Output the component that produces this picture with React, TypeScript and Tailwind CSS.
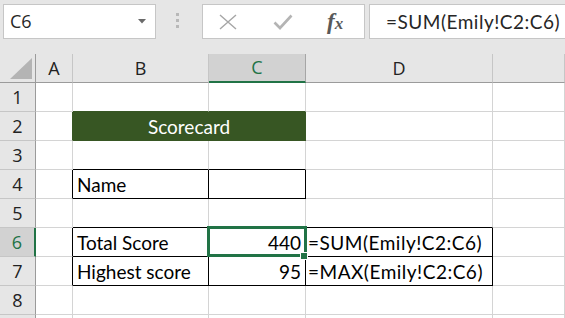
import React from "react";

type Edge = "grid" | "black" | "green";

interface CellSpec {
  text?: string;
  r?: Edge;
  b?: Edge;
  align?: "left" | "right" | "center" | "formula";
  span?: boolean;
  bg?: string;
}

const rightColor: Record<Edge, string> = {
  grid: "border-r-[#d4d4d4]",
  black: "border-r-black",
  green: "border-r-[#375623]",
};

const bottomColor: Record<Edge, string> = {
  grid: "border-b-[#d4d4d4]",
  black: "border-b-black",
  green: "border-b-[#375623]",
};

const alignClass = {
  left: "justify-start px-[4px]",
  right: "justify-end px-[4px]",
  center: "justify-center px-[4px]",
  formula: "justify-start pl-[2px] tracking-[0.5px]",
};

const rows: { n: number; label?: boolean; active?: boolean; cells: CellSpec[] }[] = [
  { n: 1, cells: [{}, { b: "green" }, { b: "green" }, {}, {}] },
  {
    n: 2,
    cells: [
      { r: "green" },
      { text: "Scorecard", r: "green", b: "green", align: "center", span: true, bg: "bg-[#375623] text-white" },
      {},
      {},
    ],
  },
  { n: 3, cells: [{}, { b: "black" }, { b: "black" }, {}, {}] },
  {
    n: 4,
    cells: [{ r: "black" }, { text: "Name", r: "black", b: "black" }, { r: "black", b: "black" }, {}, {}],
  },
  { n: 5, cells: [{}, { b: "black" }, { b: "black" }, { b: "black" }, {}] },
  {
    n: 6,
    active: true,
    cells: [
      { r: "black" },
      { text: "Total Score", r: "black", b: "black" },
      { text: "440", r: "black", b: "black", align: "right" },
      { text: "=SUM(Emily!C2:C6)", r: "black", b: "black", align: "formula" },
      {},
    ],
  },
  {
    n: 7,
    cells: [
      { r: "black" },
      { text: "Highest score", r: "black", b: "black" },
      { text: "95", r: "black", b: "black", align: "right" },
      { text: "=MAX(Emily!C2:C6)", r: "black", b: "black", align: "formula" },
      {},
    ],
  },
  { n: 8, cells: [{}, {}, {}, {}, {}] },
  // only the top edge of row 9 shows
  { n: 9, label: false, cells: [{}, {}, {}, {}, {}] },
];

const cellFont = { fontFamily: "Lato, 'Open Sans', sans-serif" };

const Cell = ({ spec }: { spec: CellSpec }) => (
  <div
    className={`h-[29px] border-r border-b flex items-center pt-[2px] text-[19px] whitespace-nowrap ${
      alignClass[spec.align ?? "left"]
    } ${rightColor[spec.r ?? "grid"]} ${bottomColor[spec.b ?? "grid"]} ${spec.span ? "col-span-2" : ""} ${
      spec.bg ?? "text-black"
    }`}
    style={cellFont}
  >
    {spec.text}
  </div>
);

const headers = ["A", "B", "C", "D", ""];

export default function App() {
  return (
    <div
      className="w-[565px] h-[318px] overflow-hidden bg-white"
      style={{ fontFamily: "'Open Sans', 'Noto Sans', sans-serif" }}
    >
      {/* formula bar */}
      <div className="h-[54px] bg-[#e6e6e6] flex items-start pt-[4px]">
        <div className="ml-[3px] w-[153px] h-[35px] bg-white border border-[#c6c6c6] flex items-center pl-[6px] pr-[9px]">
          <span className="text-[18px] text-[#262626] flex-1">C6</span>
          <svg width="8" height="5" viewBox="0 0 8 5">
            <polygon points="0,0 8,0 4,4.5" fill="#6a6a6a" />
          </svg>
        </div>
        <div className="w-[46px] flex flex-col gap-[3px] pl-[20px] pt-[9px]">
          <div className="w-[3px] h-[3px] bg-[#b8b8b8]" />
          <div className="w-[3px] h-[3px] bg-[#b8b8b8]" />
          <div className="w-[3px] h-[3px] bg-[#b8b8b8]" />
        </div>
        <div className="w-[163px] h-[35px] bg-white border border-[#c6c6c6] flex items-center">
          <svg className="ml-[16px]" width="18" height="16" viewBox="0 0 18 16">
            <path d="M1 1 L17 15 M17 1 L1 15" stroke="#a6a6a6" strokeWidth="1.4" fill="none" />
          </svg>
          <svg className="ml-[36px]" width="20" height="16" viewBox="0 0 20 16">
            <path d="M1.5 8.5 L7 14 L18.5 1.5" stroke="#b4b4b4" strokeWidth="2.6" fill="none" />
          </svg>
          <span
            className="ml-[34px] text-[#595959] italic font-bold leading-none flex items-baseline"
            style={{ fontFamily: "'Liberation Serif', serif" }}
          >
            <span className="text-[23px]">f</span>
            <span className="text-[17px]">x</span>
          </span>
        </div>
        <div className="ml-[4px] flex-1 -mr-[2px] h-[35px] bg-white border border-[#c6c6c6] flex items-center pl-[16px] pt-[1px]">
          <span className="text-[19px] tracking-[0.5px] text-[#262626] whitespace-nowrap" style={cellFont}>
            =SUM(Emily!C2:C6)
          </span>
        </div>
      </div>

      {/* sheet grid */}
      <div className="relative grid grid-cols-[36px_37px_136px_97px_187px_1fr]">
        {/* column headers */}
        <div className="h-[29px] bg-[#e6e6e6] border-r border-b border-r-[#9b9b9b] border-b-[#9b9b9b] flex items-end justify-end pr-[3px] pb-[3px]">
          <svg width="22" height="21" viewBox="0 0 22 21">
            <polygon points="22,0 22,21 0,21" fill="#b4b4b4" />
          </svg>
        </div>
        {headers.map((h) =>
          h === "C" ? (
            <div
              key={h}
              className="h-[29px] bg-[#d2d2d2] border-r border-r-[#a6a6a6] border-b-2 border-b-[#217346] flex items-center justify-center text-[18px] text-[#217346]"
            >
              {h}
            </div>
          ) : (
            <div
              key={h || "E"}
              className="h-[29px] bg-[#e6e6e6] border-r border-b border-r-[#c6c6c6] border-b-[#9b9b9b] flex items-center justify-center text-[18px] text-[#222]"
            >
              {h}
            </div>
          )
        )}

        {rows.map((row) => (
          <React.Fragment key={row.n}>
            {row.active ? (
              <div className="h-[29px] bg-[#d2d2d2] border-r-2 border-b border-r-[#217346] border-b-[#c6c6c6] flex items-center justify-center text-[18px] text-[#217346]">
                {row.n}
              </div>
            ) : (
              <div className="h-[29px] bg-[#e6e6e6] border-r border-b border-r-[#9b9b9b] border-b-[#c6c6c6] flex items-center justify-center text-[18px] text-[#222]">
                {row.label === false ? null : row.n}
              </div>
            )}
            {row.cells.map((spec, i) => (
              <Cell key={i} spec={spec} />
            ))}
          </React.Fragment>
        ))}

        {/* active cell C6 */}
        <div className="absolute left-[207px] top-[172px] w-[100px] h-[31px] border-[3px] border-[#217346]" />
        <div className="absolute left-[300px] top-[198px] w-[8px] h-[8px] bg-[#217346] border border-white" />
      </div>
    </div>
  );
}
